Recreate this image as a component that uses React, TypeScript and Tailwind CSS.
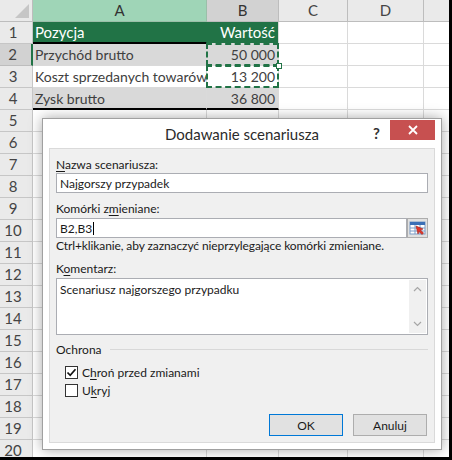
import React from 'react';

// column widths: row header, A, B, C, D, E (partial)
const colW = ['w-[33px]', 'w-[174px]', 'w-[72px]', 'w-[69px]', 'w-[76px]', 'w-[25px]'];

type RowSpec = {
  a?: string;
  b?: string;
  bg?: string;
  text?: string;
  marquee?: boolean;
  handle?: boolean;
  blackBottom?: 'a' | 'ab';
  sel?: boolean;
};

const specs: Record<number, RowSpec> = {
  1: { a: 'Pozycja', b: 'Wartość', bg: 'bg-[#217346]', text: 'text-white', blackBottom: 'a' },
  2: { a: 'Przychód brutto', b: '50 000', bg: 'bg-[#d9d9d9]', text: 'text-[#404040]', marquee: true, handle: true, sel: true },
  3: { a: 'Koszt sprzedanych towarów', b: '13 200', bg: 'bg-white', text: 'text-[#404040]', marquee: true },
  4: { a: 'Zysk brutto', b: '36 800', bg: 'bg-[#d9d9d9]', text: 'text-[#404040]', blackBottom: 'ab' },
};

function SheetRow({ n }: { n: number }) {
  const s = specs[n];
  const green = n === 1;
  return (
    <div className="flex h-[22px]">
      <div
        className={`${colW[0]} shrink-0 flex items-center justify-center pr-[6px] border-b border-r text-[15px] text-[#444] ${
          s?.sel ? 'bg-[#d2d2d2] border-r-2 border-r-[#217346] border-b-[#bdbdbd]' : 'bg-[#eaeaea] border-[#c6c6c6]'
        }`}
      >
        {n}
      </div>
      <div
        className={`${colW[1]} shrink-0 flex items-center px-[2px] text-[14px] whitespace-nowrap overflow-hidden ${s ? `${s.bg} ${s.text}` : 'bg-white'} ${
          s?.blackBottom ? 'border-b-2 border-b-black' : 'border-b border-b-[#dadada]'
        } ${green ? 'border-r border-r-[#217346] text-[15px]' : 'border-r border-r-[#dadada]'}`}
      >
        {s?.a}
      </div>
      <div
        className={`${colW[2]} shrink-0 relative flex items-center justify-end px-[3px] whitespace-nowrap ${green ? 'text-[15px]' : 'text-[14px]'} ${s ? `${s.bg} ${s.text}` : 'bg-white'} ${
          s?.blackBottom === 'ab' ? 'border-b-2 border-b-black' : 'border-b border-b-[#dadada]'
        } border-r border-r-[#dadada]`}
      >
        {s?.b}
        {s?.marquee && (
          <div className="absolute left-[-1px] top-[-1px] right-[-1px] bottom-[-1px] border-2 border-dashed border-[#217346]" />
        )}
        {s?.handle && (
          <div className="absolute right-[-4px] bottom-[-4px] w-[6px] h-[6px] bg-white border border-[#217346] z-10" />
        )}
      </div>
      <div className={`${colW[3]} shrink-0 bg-white border-b border-r border-[#dadada]`} />
      <div className={`${colW[4]} shrink-0 bg-white border-b border-r border-[#dadada]`} />
      <div className={`${colW[5]} shrink-0 bg-white border-b border-[#dadada]`} />
    </div>
  );
}

function RangeIcon() {
  return (
    <svg width="17" height="14" viewBox="0 0 17 14">
      <rect x="1" y="1" width="15" height="12" fill="#ffffff" stroke="#7a9cc6" />
      <rect x="1" y="1" width="15" height="3" fill="#3b6fb6" />
      <line x1="1" y1="7" x2="16" y2="7" stroke="#7a9cc6" />
      <line x1="1" y1="10" x2="16" y2="10" stroke="#7a9cc6" />
      <line x1="6" y1="4" x2="6" y2="13" stroke="#7a9cc6" />
      <line x1="11" y1="4" x2="11" y2="13" stroke="#7a9cc6" />
      <path d="M7 5 L14 8 L11.5 9 L14.5 12 L13 13.5 L10 10.5 L9 13 Z" fill="#e0362a" stroke="#a01e16" strokeWidth="0.6" />
    </svg>
  );
}

function CheckBox({ checked }: { checked?: boolean }) {
  return (
    <div className="w-[13px] h-[13px] border border-[#333] bg-white flex items-center justify-center">
      {checked && (
        <svg width="11" height="11" viewBox="0 0 11 11">
          <path d="M1.5 5.5 L4.2 8.3 L9.5 2.2" fill="none" stroke="#111" strokeWidth="1.7" />
        </svg>
      )}
    </div>
  );
}

function Dialog() {
  return (
    <div className="absolute left-[42px] top-[118px] w-[400px] h-[332px] bg-white border border-[#a0a0a0] shadow-[0_0_12px_rgba(0,0,0,0.35)] flex flex-col px-[6px] pb-[6px] font-['Lato',sans-serif] text-[#1a1a1a]">
      {/* title bar */}
      <div className="h-[29px] shrink-0 relative flex items-center justify-center">
        <span className="text-[15px] text-[#2b2b2b] pt-[1px]">Dodawanie scenariusza</span>
        <span className="absolute left-[324px] top-[3px] text-[15px] font-bold text-[#333]">?</span>
        <div className="absolute right-0 top-[1px] w-[45px] h-[20px] bg-[#c75050] flex items-center justify-center">
          <svg width="10" height="10" viewBox="0 0 10 10">
            <path d="M1 1 L9 9 M9 1 L1 9" stroke="#fff" strokeWidth="1.8" />
          </svg>
        </div>
      </div>

      {/* body */}
      <div className="flex-1 bg-[#f0f0f0] border border-[#dadada] px-[6px] pt-[8px] flex flex-col text-[12px] leading-[15px]">
        <div>
          <u className="underline-offset-2">N</u>azwa scenariusza:
        </div>
        <div className="mt-[1px] h-[20px] bg-white border border-[#abadb3] flex items-center px-[3px]">
          Najgorszy przypadek
        </div>

        <div className="mt-[8px]">
          Komórki z<u className="underline-offset-2">m</u>ieniane:
        </div>
        <div className="mt-[2px] h-[20px] flex">
          <div className="flex-1 bg-white border border-[#abadb3] flex items-center px-[3px]">
            B2,B3
            <span className="inline-block w-px h-[13px] bg-black ml-px" />
          </div>
          <div className="w-[21px] h-[20px] bg-[#e1e1e1] border border-[#adadad] flex items-center justify-center">
            <RangeIcon />
          </div>
        </div>
        <div className="mt-[0px] tracking-[-0.1px]">Ctrl+klikanie, aby zaznaczyć nieprzylegające komórki zmieniane.</div>

        <div className="mt-[8px]">
          K<u className="underline-offset-2">o</u>mentarz:
        </div>
        <div className="mt-[2px] h-[57px] bg-white border border-[#abadb3] flex">
          <div className="flex-1 px-[3px] pt-[3px]">Scenariusz najgorszego przypadku</div>
          <div className="w-[17px] m-px bg-[#f0f0f0] flex flex-col items-center justify-between py-[6px]">
            <svg width="9" height="6" viewBox="0 0 9 6">
              <path d="M1 5 L4.5 1.5 L8 5" fill="none" stroke="#a6a6a6" strokeWidth="1.2" />
            </svg>
            <svg width="9" height="6" viewBox="0 0 9 6">
              <path d="M1 1 L4.5 4.5 L8 1" fill="none" stroke="#a6a6a6" strokeWidth="1.2" />
            </svg>
          </div>
        </div>

        <div className="mt-[7px] flex items-center">
          <span>Ochrona</span>
          <div className="flex-1 h-px bg-[#d8d8d8] ml-[8px]" />
        </div>
        <div className="mt-[7px] ml-[9px] flex items-center gap-[4px] h-[16px]">
          <CheckBox checked />
          <span>
            C<u className="underline-offset-2">h</u>roń przed zmianami
          </span>
        </div>
        <div className="mt-[2px] ml-[9px] flex items-center gap-[4px] h-[16px]">
          <CheckBox />
          <span>
            U<u className="underline-offset-2">k</u>ryj
          </span>
        </div>

        <div className="mt-auto mb-[6px] flex justify-end gap-[10px] pr-px">
          <div className="w-[74px] h-[22px] bg-[#e1e1e1] border border-[#0078d7] flex items-center justify-center">OK</div>
          <div className="w-[74px] h-[22px] bg-[#e1e1e1] border border-[#adadad] flex items-center justify-center">Anuluj</div>
        </div>
      </div>
    </div>
  );
}

export default function App() {
  const rows = Array.from({ length: 20 }, (_, i) => i + 1);
  return (
    <div className="w-[452px] h-[460px] relative overflow-hidden bg-white border-r-[3px] border-b-[3px] border-black font-['Lato',sans-serif]">
      {/* column headers */}
      <div className="flex h-[22px]">
        <div className={`${colW[0]} shrink-0 bg-[#eaeaea] border-b border-r border-[#bdbdbd] relative`}>
          <svg className="absolute right-[3px] bottom-[3px]" width="14" height="14" viewBox="0 0 14 14">
            <polygon points="14,0 14,14 0,14" fill="#c6c6c6" />
          </svg>
        </div>
        <div className={`${colW[1]} shrink-0 bg-[#9fd5b7] border-b border-r border-[#9bbfa9] flex items-center justify-center text-[15px] text-[#333]`}>A</div>
        <div className={`${colW[2]} shrink-0 bg-[#d2d2d2] border-b border-r border-[#bdbdbd] flex items-center justify-center text-[15px] text-[#333]`}>B</div>
        <div className={`${colW[3]} shrink-0 bg-[#eaeaea] border-b border-r border-[#bdbdbd] flex items-center justify-center text-[15px] text-[#444]`}>C</div>
        <div className={`${colW[4]} shrink-0 bg-[#eaeaea] border-b border-r border-[#bdbdbd] flex items-center justify-center text-[15px] text-[#444]`}>D</div>
        <div className={`${colW[5]} shrink-0 bg-[#eaeaea] border-b border-[#bdbdbd]`} />
      </div>
      {rows.map((n) => (
        <SheetRow key={n} n={n} />
      ))}
      <Dialog />
    </div>
  );
}
